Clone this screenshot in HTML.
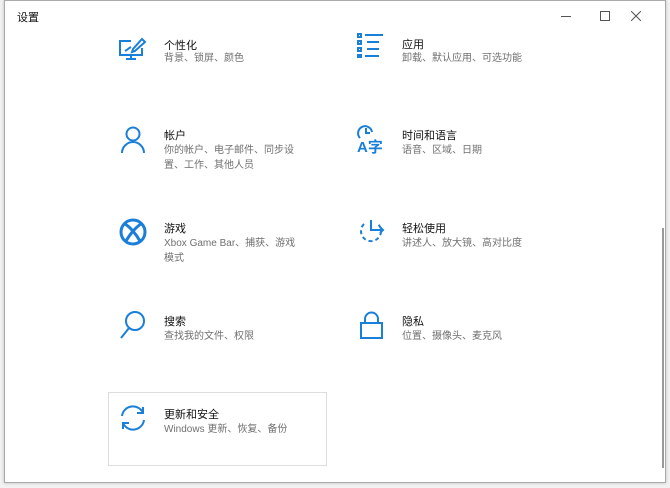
<!DOCTYPE html>
<html><head><meta charset="utf-8"><style>
body{margin:0;width:670px;height:488px;background:#f2f2f2;position:relative;overflow:hidden;font-family:"Liberation Sans","Noto Sans CJK SC",sans-serif}
.win{position:absolute;left:4px;top:0;width:660px;height:481px;background:#fff;border:1px solid #aaa;box-shadow:0 0 3px #bbb}
.t{position:absolute;font-size:11px;color:#111}
.s{position:absolute;font-size:10px;color:#707070;line-height:15px}
svg{position:absolute}
</style></head><body>
<div class="win"></div>
<div class="t" style="left:17px;top:9px;font-size:11px">设置</div>
<div style="position:absolute;left:561px;top:16px;width:10px;height:1px;background:#555"></div>
<div style="position:absolute;left:600px;top:11px;width:8px;height:8px;border:1px solid #555"></div>
<svg style="left:631px;top:11px" width="10" height="10" viewBox="0 0 10 10" stroke="#555" stroke-width="1"><path d="M0 0L10 10M10 0L0 10"/></svg>
<div style="position:absolute;left:662px;top:228px;width:2px;height:240px;background:#999"></div>

<svg style="left:118px;top:37px" width="30" height="26" viewBox="0 0 30 26" fill="none" stroke="#1a7fd8" stroke-width="2"><path d="M13 4H2v14h22v-7"/><path d="M13 22v-4M8 22h10"/><path d="M24 2l3 3-10 9-3 1 1-3z"/><path d="M7 14c2-1 4-3 6-4"/></svg>
<div class="t" style="left:164px;top:37px">个性化</div><div class="s" style="left:164px;top:51px">背景、锁屏、颜色</div>

<svg style="left:357px;top:33px" width="28" height="26" viewBox="0 0 28 26" fill="none" stroke="#1a7fd8" stroke-width="2"><rect x="1" y="1" width="3" height="3"/><rect x="1" y="8" width="3" height="3"/><rect x="1" y="15" width="3" height="3"/><rect x="1" y="22" width="3" height="2"/><path d="M8 2h18M10 9h12M10 16h12M8 23h14"/></svg>
<div class="t" style="left:402px;top:36px">应用</div><div class="s" style="left:402px;top:51px">卸载、默认应用、可选功能</div>

<svg style="left:120px;top:126px" width="26" height="28" viewBox="0 0 26 28" fill="none" stroke="#1a7fd8" stroke-width="2"><circle cx="13" cy="8" r="6.5"/><path d="M2 27c0-6 5-11 11-11s11 5 11 11"/></svg>
<div class="t" style="left:164px;top:127px">帐户</div><div class="s" style="left:164px;top:143px">你的帐户、电子邮件、同步设<br>置、工作、其他人员</div>

<svg style="left:356px;top:124px" width="30" height="32" viewBox="0 0 30 32" fill="none" stroke="#1a7fd8" stroke-width="2"><path d="M4 14a7 7 0 1 1 12-6"/><path d="M10 4v5h4"/></svg>
<div style="position:absolute;left:357px;top:136px;color:#1a7fd8;font-size:15px;font-weight:bold">A字</div>
<div class="t" style="left:402px;top:127px">时间和语言</div><div class="s" style="left:402px;top:143px">语音、区域、日期</div>

<svg style="left:119px;top:218px" width="28" height="28" viewBox="0 0 28 28" fill="none" stroke="#1a7fd8" stroke-width="3"><circle cx="14" cy="14" r="12"/><path d="M6 6c5 3 11 10 15 17M22 6c-5 3-11 10-15 17"/></svg>
<div class="t" style="left:164px;top:220px">游戏</div><div class="s" style="left:164px;top:236px">Xbox Game Bar、捕获、游戏<br>模式</div>

<svg style="left:356px;top:218px" width="30" height="28" viewBox="0 0 30 28" fill="none" stroke="#1a7fd8" stroke-width="2"><path d="M8 6a10 10 0 1 0 14 0" stroke-dasharray="4 3"/><path d="M15 2v10h12M24 9l3 3-3 3"/></svg>
<div class="t" style="left:402px;top:220px">轻松使用</div><div class="s" style="left:402px;top:236px">讲述人、放大镜、高对比度</div>

<svg style="left:119px;top:310px" width="28" height="30" viewBox="0 0 28 30" fill="none" stroke="#1a7fd8" stroke-width="2"><circle cx="16" cy="11" r="9"/><path d="M10 18L2 28"/></svg>
<div class="t" style="left:164px;top:313px">搜索</div><div class="s" style="left:164px;top:329px">查找我的文件、权限</div>

<svg style="left:360px;top:310px" width="24" height="30" viewBox="0 0 24 30" fill="none" stroke="#1a7fd8" stroke-width="2"><rect x="1" y="13" width="21" height="15"/><path d="M5 13V9a6.5 6.5 0 0 1 13 0v4"/></svg>
<div class="t" style="left:402px;top:313px">隐私</div><div class="s" style="left:402px;top:329px">位置、摄像头、麦克风</div>

<div style="position:absolute;left:108px;top:392px;width:217px;height:72px;border:1px solid #ddd"></div>
<svg style="left:119px;top:404px" width="28" height="28" viewBox="0 0 28 28" fill="none" stroke="#1a7fd8" stroke-width="2"><path d="M3 12a11 11 0 0 1 21-3M25 16a11 11 0 0 1-21 3"/><path d="M24 3v6h-6M4 25v-6h6"/></svg>
<div class="t" style="left:164px;top:406px">更新和安全</div><div class="s" style="left:164px;top:422px">Windows 更新、恢复、备份</div>
</body></html>
